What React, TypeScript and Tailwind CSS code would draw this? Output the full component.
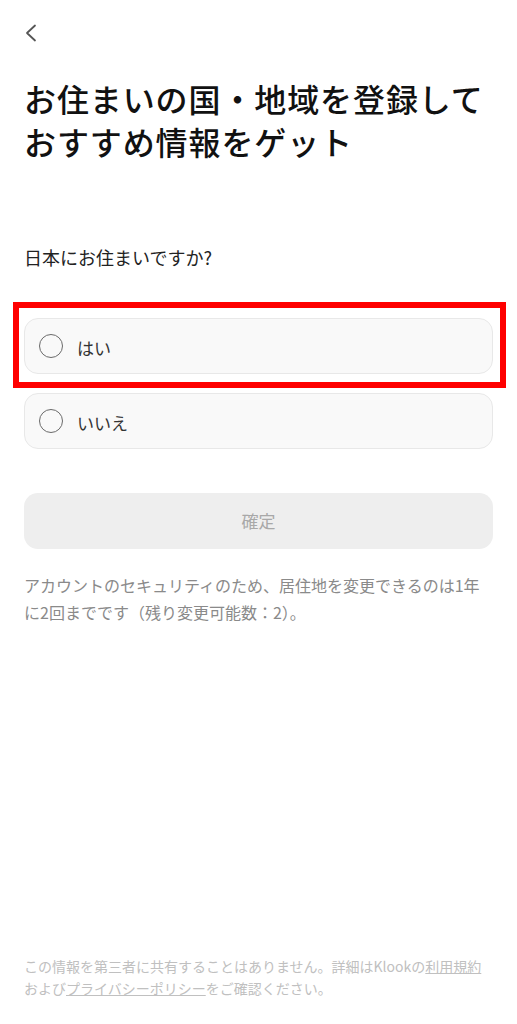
const font = { fontFamily: '"Noto Sans CJK JP", "Noto Sans", sans-serif' };

function Radio({ label }: { label: string }) {
  return (
    <div className="flex h-14 items-center gap-[14px] rounded-[14px] border border-[#e8e8e8] bg-[#f9f9f9] pl-[14px]">
      <span className="h-6 w-6 rounded-full border-[1.5px] border-[#6a6a6a]" />
      <span className="pt-[3px] text-[17px] text-[#333]">{label}</span>
    </div>
  );
}

export default function App() {
  return (
    <div style={font} className="relative flex min-h-screen w-full flex-col bg-white px-6">
      <div className="pt-6">
        <svg width="14" height="18" viewBox="0 0 14 18" fill="none" stroke="#555" strokeWidth="1.8" strokeLinecap="round" strokeLinejoin="round">
          <path d="M11 1.5 L3 9 L11 16.5" />
        </svg>
      </div>

      <h1 className="mt-[35px] text-[32px] leading-[43px] font-medium tracking-[0.9px] text-[#111]">
        お住まいの国・地域を登録して
        <br />
        おすすめ情報をゲット
      </h1>

      <p className="mt-[81px] text-[18px] leading-[26px] text-[#222]">日本にお住まいですか?</p>

      <div className="mt-12 flex flex-col gap-[19px]">
        <Radio label="はい" />
        <Radio label="いいえ" />
      </div>

      <button className="mt-[44px] h-14 w-full rounded-[14px] bg-[#eeeeee] text-[17px] text-[#a8a8a8]">確定</button>

      <p className="mt-[23px] text-[16px] leading-[27px] text-[#8a8a8a]">
        アカウントのセキュリティのため、居住地を変更できるのは1年に2回までです（残り変更可能数：2）。
      </p>

      <p className="mt-auto pb-[25px] text-[14px] leading-[22px] text-[#c0c0c0]">
        この情報を第三者に共有することはありません。詳細はKlookの<span className="underline">利用規約</span>
        <br />
        および<span className="underline">プライバシーポリシー</span>をご確認ください。
      </p>

      <div className="pointer-events-none absolute left-[13px] top-[302px] h-[86px] w-[493px] border-[6px] border-[#ff0000]" />
    </div>
  );
}
